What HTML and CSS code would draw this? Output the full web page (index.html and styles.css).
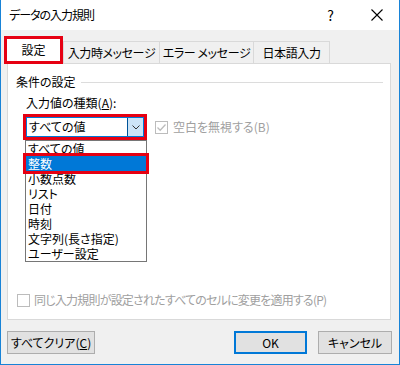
FILE: index.html
```html
<!DOCTYPE html>
<html lang="ja">
<head>
<meta charset="utf-8">
<link rel="stylesheet" href="styles.css">
</head>
<body>
<div class="window">
  <div class="titlebar">
    <span class="title">データの入力規則</span>
    <span class="help">?</span>
    <svg class="close" width="12" height="12" viewBox="0 0 12 12"><path d="M0.5 0.5L11.5 11.5M11.5 0.5L0.5 11.5" stroke="#000" stroke-width="1.1" fill="none"/></svg>
  </div>
  <div class="client">
    <div class="tabs">
      <div class="tab active">設定</div>
      <div class="tab t2">入力時メッセージ</div>
      <div class="tab t3">エラー メッセージ</div>
      <div class="tab t4">日本語入力</div>
    </div>
    <div class="panel">
      <div class="group-head"><span>条件の設定</span><span class="rule"></span></div>
      <div class="field-label">入力値の種類(<u>A</u>):</div>
      <div class="field-row">
        <div class="combo">
          <span class="combo-value">すべての値</span>
          <span class="combo-btn"><svg width="8" height="5" viewBox="0 0 8 5"><path d="M0.5 0.5L4 4L7.5 0.5" stroke="#333" stroke-width="1" fill="none"/></svg></span>
        </div>
        <div class="check disabled">
          <span class="box"><svg width="11" height="11" viewBox="0 0 11 11"><path d="M1.5 5.5L4.2 8.2L9.5 2.5" stroke="#bcbcbc" stroke-width="1.3" fill="none"/></svg></span>
          <span>空白を無視する(B)</span>
        </div>
      </div>
      <ul class="droplist">
        <li>すべての値</li>
        <li class="sel">整数</li>
        <li>小数点数</li>
        <li>リスト</li>
        <li>日付</li>
        <li>時刻</li>
        <li>文字列(長さ指定)</li>
        <li>ユーザー設定</li>
      </ul>
      <div class="check disabled bottom">
        <span class="box"></span>
        <span class="bottom-text">同じ入力規則が設定されたすべてのセルに変更を適用する(P)</span>
      </div>
    </div>
    <div class="buttons">
      <div class="btn clear">すべてクリア(<u>C</u>)</div>
      <div class="btn ok">OK</div>
      <div class="btn cancel">キャンセル</div>
    </div>
  </div>
</div>
</body>
</html>
```
FILE: styles.css
```css
* { box-sizing: border-box; }
body {
  margin: 0;
  font-family: "Noto Sans CJK JP", "Noto Sans", sans-serif;
  font-size: 12px;
  font-feature-settings: "palt";
  color: #000;
  background: #fff;
}
.window {
  width: 400px;
  height: 365px;
  border: 1px solid #1883d7;
  border-top: none;
  display: flex;
  flex-direction: column;
  background: #f0f0f0;
}
.titlebar {
  height: 30px;
  flex: none;
  background: #fff;
  display: flex;
  align-items: center;
  padding: 0 16px 0 8px;
}
.title { flex: 1; line-height: 16px; letter-spacing: -1px; }
.help { line-height: 16px; margin-right: 37px; font-size: 14px; }
.close { display: block; }
.client { flex: 1; display: flex; flex-direction: column; }
.tabs {
  margin-top: 6px;
  height: 27px;
  padding-left: 3px;
  display: flex;
  align-items: flex-end;
}
.tab {
  height: 22px;
  border: 1px solid #d9d9d9;
  border-bottom: none;
  background: #f0f0f0;
  display: flex;
  align-items: center;
  justify-content: center;
  line-height: 16px;
  white-space: nowrap;
  margin-left: -1px;
  letter-spacing: -0.4px;
}
.tab.active {
  width: 59px;
  height: 28px;
  margin-left: 0;
  margin-bottom: -1px;
  border: 3px solid #e60012;
  background: #fff;
  position: relative;
  z-index: 1;
  letter-spacing: 0;
}
.tab.t2 { width: 97px; margin-left: 0; }
.tab.t3 { width: 95px; }
.tab.t4 { width: 77px; }
.panel {
  height: 257px;
  margin: 0 8px 0 6px;
  border: 1px solid #d9d9d9;
  background: #fff;
  display: flex;
  flex-direction: column;
  padding: 10px 0 11px 0;
  position: relative;
}
.group-head {
  display: flex;
  align-items: center;
  padding-left: 8px;
  padding-right: 7px;
  line-height: 16px;
}
.rule { flex: 1; height: 1px; background: #dcdcdc; margin-left: 5px; }
.field-label { padding-left: 18px; margin-top: 5px; line-height: 16px; }
.field-row {
  display: flex;
  align-items: center;
  margin-top: 6px;
  padding-left: 18px;
}
.combo {
  width: 118px;
  height: 20px;
  border: 1px solid #0078d7;
  outline: 3px solid #e60012;
  background: #fff;
  display: flex;
}
.combo-value { flex: 1; padding-left: 2px; line-height: 18px; }
.combo-btn {
  width: 16px;
  background: #cce4f7;
  border-left: 1px solid #005499;
  display: flex;
  align-items: center;
  justify-content: center;
}
.combo-btn svg { display: block; }
.check { display: flex; align-items: center; line-height: 16px; }
.check.disabled { color: #a0a0a0; }
.field-row .check { margin-left: 11px; gap: 5px; }
.box {
  width: 13px;
  height: 13px;
  border: 1px solid #bcbcbc;
  background: #fff;
  display: flex;
  align-items: center;
  justify-content: center;
  flex: none;
}
.box svg { display: block; }
.check.bottom { margin-top: auto; margin-left: 9px; gap: 4px; }
.bottom-text { letter-spacing: -0.8px; }
.droplist {
  position: absolute;
  left: 17px;
  top: 76px;
  width: 122px;
  margin: 0;
  padding: 0;
  list-style: none;
  border: 1px solid #767676;
  background: #fff;
  z-index: 2;
}
.droplist li {
  height: 15px;
  line-height: 15px;
  padding-left: 2px;
  white-space: nowrap;
  overflow: hidden;
}
.droplist li.sel {
  background: #0078d7;
  color: #fff;
  outline: 3px solid #e60012;
  overflow: visible;
}
.buttons {
  display: flex;
  margin-top: 11px;
  padding: 0 7px 0 6px;
}
.btn {
  height: 23px;
  border: 1px solid #adadad;
  background: #e1e1e1;
  display: flex;
  align-items: center;
  justify-content: center;
  line-height: 16px;
  white-space: nowrap;
}
.btn.clear { width: 88px; }
.btn.ok { width: 73px; margin-left: auto; border: 2px solid #0078d7; }
.btn.cancel { width: 74px; margin-left: 11px; }
```
